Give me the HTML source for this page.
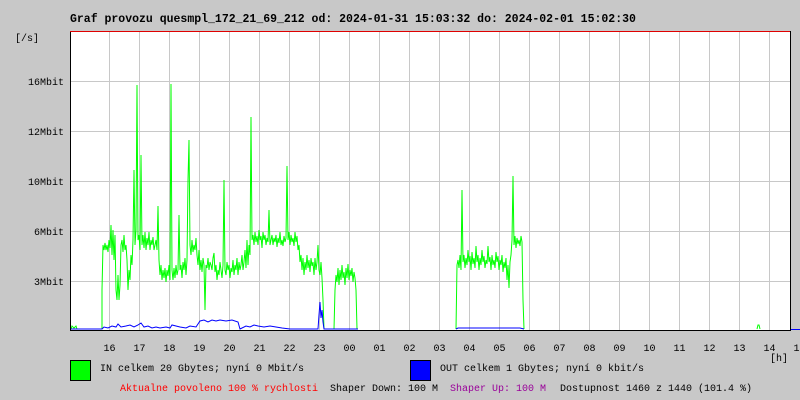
<!DOCTYPE html>
<html><head><meta charset="utf-8"><style>
html,body{margin:0;padding:0;background:#c8c8c8;width:800px;height:400px;overflow:hidden}
svg{display:block}
text{font-family:"Liberation Mono",monospace;font-size:10px;fill:#000}
</style></head><body>
<svg width="800" height="400" viewBox="0 0 800 400" xmlns="http://www.w3.org/2000/svg">
<rect x="0" y="0" width="800" height="400" fill="#c8c8c8"/>
<text x="70" y="22" style="font-weight:bold;font-size:11.5px">Graf provozu quesmpl_172_21_69_212 od: 2024-01-31 15:03:32 do: 2024-02-01 15:02:30</text>
<rect x="70" y="31" width="720" height="299" fill="#fff"/>
<g stroke="#c8c8c8" stroke-width="1">
<path d="M109.5 31V330M139.5 31V330M169.5 31V330M199.5 31V330M229.5 31V330M259.5 31V330M289.5 31V330M319.5 31V330M349.5 31V330M379.5 31V330M409.5 31V330M439.5 31V330M469.5 31V330M499.5 31V330M529.5 31V330M559.5 31V330M589.5 31V330M619.5 31V330M649.5 31V330M679.5 31V330M709.5 31V330M739.5 31V330M769.5 31V330"/>
<path d="M70 81.5H790M70 131.5H790M70 181.5H790M70 231.5H790M70 281.5H790"/>
</g>
<g fill="none" stroke="#00ff00" stroke-width="1">
<polyline points="71,329 72,326 74,328 76,326 77,329 102,329 102,290 103,245 104,250 105,243 106,250 107,245 108,252 109,240 110,248 111,225 112,255 113,230 114,260 115,235 116,290 117,300 118,275 119,300 120,285 121,245 122,240 123,252 124,235 125,250 126,245 127,260 128,290 129,270 130,280 131,255 132,265 133,240 134,170 135,245 136,230 137,85 138,240 139,235 140,250 141,155 142,245 143,235 144,248 145,232 146,250 147,238 148,245 149,232 150,250 151,240 152,245 153,237 154,250 155,245 156,240 157,250 158,206 159,260 160,275 161,265 162,280 163,270 164,278 165,268 166,282 167,270 168,276 169,265 170,280 171,84 172,270 173,280 174,268 175,278 176,265 177,275 178,270 179,215 180,270 181,265 182,278 183,262 184,270 185,258 186,275 187,260 188,180 189,140 190,245 191,255 192,240 193,252 194,245 195,250 196,238 197,255 198,265 199,250 200,270 201,260 202,272 203,258 204,265 205,310 206,265 207,268 208,258 209,270 210,262 211,265 212,270 213,258 214,253 215,272 216,265 217,280 218,270 219,275 220,262 221,270 222,278 223,265 224,180 225,270 226,275 227,262 228,270 229,265 230,278 231,268 232,272 233,260 234,275 235,265 236,270 237,258 238,275 239,262 240,270 241,265 242,255 243,270 244,262 245,250 246,268 247,240 248,265 249,245 250,255 251,117 252,240 253,235 254,245 255,232 256,242 257,236 258,245 259,230 260,240 261,236 262,248 263,232 264,240 265,235 266,245 267,238 268,242 269,210 270,245 271,240 272,235 273,245 274,238 275,242 276,235 277,247 278,238 279,243 280,232 281,245 282,240 283,246 284,236 285,242 286,238 287,166 288,240 289,232 290,245 291,235 292,242 293,238 294,246 295,232 296,242 297,236 298,250 299,245 300,262 301,255 302,270 303,258 304,275 305,262 306,270 307,255 308,268 309,260 310,272 311,258 312,266 313,262 314,275 315,258 316,270 317,262 318,245 319,270 320,275 321,262 322,278 323,300 324,329 325,329 334,329 335,290 336,275 337,282 338,268 339,285 340,270 341,280 342,265 343,278 344,272 345,285 346,268 347,278 348,264 349,280 350,270 351,276 352,268 353,282 354,272 355,278 356,290 357,329"/>
<polyline points="456,329 457,265 458,260 459,268 460,255 461,270 462,190 463,262 464,255 465,268 466,258 467,265 468,250 469,262 470,256 471,270 472,252 473,264 474,258 475,268 476,246 477,262 478,255 479,270 480,258 481,265 482,250 483,262 484,256 485,268 486,260 487,264 488,246 489,262 490,257 491,270 492,255 493,265 494,260 495,268 496,252 497,262 498,256 499,270 500,260 501,265 502,255 503,272 504,262 505,268 506,258 507,280 508,265 509,288 510,262 511,255 512,240 513,176 514,245 515,236 516,248 517,238 518,244 519,240 520,246 521,236 522,242 523,300 524,329"/>
<polyline points="757,329 758,325 759,325 760,329"/>
</g>
<g fill="none" stroke="#0000ff" stroke-width="1">
<polyline points="71,329 102,329 104,327 108,328 112,326 116,327 118,324 121,327 126,326 130,325 134,327 138,325 141,323 144,327 148,326 152,328 156,327 160,328 166,327 170,328 172,325 176,326 180,327 186,328 190,326 196,327 200,321 204,320 208,322 212,320 216,321 220,320 226,321 232,320 238,322 240,329 246,326 250,327 254,325 258,326 264,327 270,326 276,327 282,328 290,329 318,329 319,315 320,302 321,318 322,310 323,322 324,329 330,329 358,329"/>
<polyline points="456,329 458,328 520,328 524,329"/>
<polyline points="790,329.5 800,329.5"/>
</g>
<path d="M70.5 31V330.5H790.5V31" fill="none" stroke="#000" stroke-width="1"/>
<path d="M70 31.5H790" stroke="#e00000" stroke-width="1"/>
<text x="15" y="41">[/s]</text>
<g text-anchor="end">
<text x="64" y="85">16Mbit</text>
<text x="64" y="135">12Mbit</text>
<text x="64" y="185">10Mbit</text>
<text x="64" y="235">6Mbit</text>
<text x="64" y="285">3Mbit</text>
</g>
<g text-anchor="middle">
<text x="109.5" y="351">16</text><text x="139.5" y="351">17</text><text x="169.5" y="351">18</text><text x="199.5" y="351">19</text><text x="229.5" y="351">20</text><text x="259.5" y="351">21</text><text x="289.5" y="351">22</text><text x="319.5" y="351">23</text><text x="349.5" y="351">00</text><text x="379.5" y="351">01</text><text x="409.5" y="351">02</text><text x="439.5" y="351">03</text><text x="469.5" y="351">04</text><text x="499.5" y="351">05</text><text x="529.5" y="351">06</text><text x="559.5" y="351">07</text><text x="589.5" y="351">08</text><text x="619.5" y="351">09</text><text x="649.5" y="351">10</text><text x="679.5" y="351">11</text><text x="709.5" y="351">12</text><text x="739.5" y="351">13</text><text x="769.5" y="351">14</text><text x="799.5" y="351">15</text>
</g>
<text x="770" y="361">[h]</text>
<rect x="70.5" y="360.5" width="20" height="20" fill="#00ff00" stroke="#000"/>
<text x="100" y="371">IN celkem 20 Gbytes; nyní 0 Mbit/s</text>
<rect x="410.5" y="360.5" width="20" height="20" fill="#0000ff" stroke="#000"/>
<text x="440" y="371">OUT celkem 1 Gbytes; nyní 0 kbit/s</text>
<text x="120" y="391" style="fill:#ff0000">Aktualne povoleno 100 % rychlosti</text>
<text x="330" y="391">Shaper Down: 100 M</text>
<text x="450" y="391" style="fill:#990099">Shaper Up: 100 M</text>
<text x="560" y="391">Dostupnost 1460 z 1440 (101.4 %)</text>
</svg>
</body></html>
